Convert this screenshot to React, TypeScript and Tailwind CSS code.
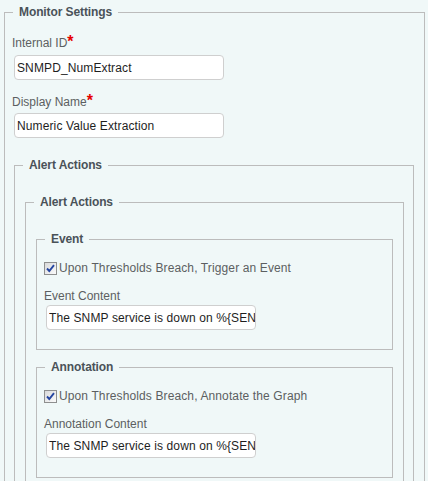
import type { ReactNode } from "react";

function Section({
  title,
  className = "",
  children,
}: {
  title: string;
  className?: string;
  children: ReactNode;
}) {
  return (
    <fieldset className={`min-w-0 border border-[#bcbcbc] pl-[7px] ${className}`}>
      <legend className="ml-px px-[6px] text-[12px] font-bold leading-[15px] tracking-[-0.1px] text-[#4a5258]">
        {title}
      </legend>
      {children}
    </fieldset>
  );
}

function Label({
  children,
  required,
  className = "",
}: {
  children: ReactNode;
  required?: boolean;
  className?: string;
}) {
  return (
    <div className={`h-[14px] leading-[14px] text-[#5c5f61] ${className}`}>
      {children}
      {required && (
        <span className="text-[16px] font-bold leading-[0] text-[#e60000]">*</span>
      )}
    </div>
  );
}

function TextInput({ value, className = "" }: { value: string; className?: string }) {
  return (
    <input
      type="text"
      readOnly
      value={value}
      className={`ml-[2px] block h-[25px] w-[210px] rounded-[4px] border border-[#cfcfcf] bg-white pl-[2px] pr-0 text-[12px] tracking-[0.12px] text-[#1e1e1e] outline-none ${className}`}
    />
  );
}

function Check({ label }: { label: string }) {
  return (
    <div className="mt-[13px] flex h-[16px] items-center gap-[2px] text-[#5c5f61]">
      <span className="flex h-[13px] w-[13px] items-center justify-center border border-[#8e8f8f] bg-gradient-to-br from-[#d9dadb] to-[#fbfbfb]">
        <svg width="9" height="9" viewBox="0 0 9 9">
          <path d="M1 4.5 L3.3 7 L8 1.2" fill="none" stroke="#2445a0" strokeWidth="1.9" />
        </svg>
      </span>
      <span className="leading-[15px] tracking-[0.12px]">{label}</span>
    </div>
  );
}

export default function App() {
  return (
    <div className="min-h-screen bg-[#f0f8f8] pl-[4px] pr-[3px] pt-[5px] font-['Liberation_Sans',Arial,sans-serif] text-[12px]">
      <Section title="Monitor Settings" className="pb-[40px] pr-[10px] pt-[16px]">
        <Label required>Internal ID</Label>
        <TextInput className="mt-[5px]" value="SNMPD_NumExtract" />
        <Label required className="mt-[15px]">
          Display Name
        </Label>
        <TextInput className="mt-[4px]" value="Numeric Value Extraction" />

        <Section title="Alert Actions" className="ml-[2px] mt-[20px] pb-[30px] pr-[9px] pt-[22px]">
          <Section title="Alert Actions" className="ml-[3px] pb-[20px] pr-[10px] pt-[22px]">
            <Section title="Event" className="ml-[3px] pb-[19px] pr-[10px]">
              <Check label="Upon Thresholds Breach, Trigger an Event" />
              <Label className="mt-[13px]">Event Content</Label>
              <TextInput
                className="mt-[2px]"
                value="The SNMP service is down on %{SENSOR_NAME}"
              />
            </Section>
            <Section title="Annotation" className="ml-[3px] mt-[10px] pb-[19px] pr-[10px]">
              <Check label="Upon Thresholds Breach, Annotate the Graph" />
              <Label className="mt-[13px]">Annotation Content</Label>
              <TextInput
                className="mt-[2px]"
                value="The SNMP service is down on %{SENSOR_NAME}"
              />
            </Section>
          </Section>
        </Section>
      </Section>
    </div>
  );
}
